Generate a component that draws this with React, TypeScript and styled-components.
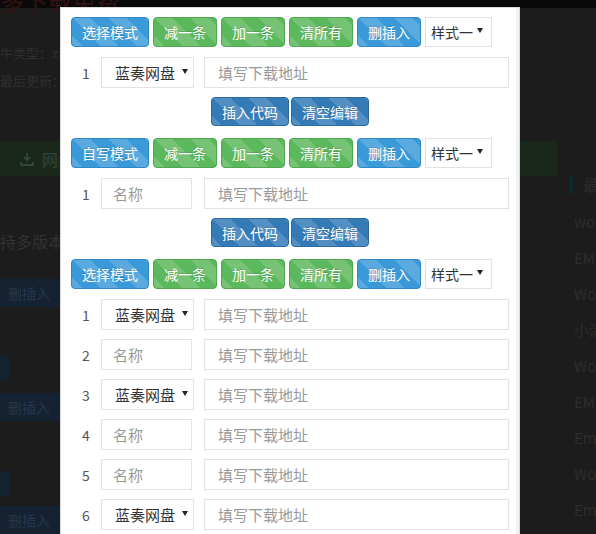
import React from "react";
import styled, { createGlobalStyle, css } from "styled-components";

// global

const GlobalStyle = createGlobalStyle`
    html, body {
        margin: 0;
        padding: 0;
        background: #1c1c1c;
    }
    body {
        font-family: "Noto Sans CJK SC", "Noto Sans", sans-serif;
    }
    * {
        box-sizing: border-box;
    }
`;

// dimmed page behind the dialog

const Page = styled.div`
    position: relative;
    width: 596px;
    height: 534px;
    overflow: hidden;
    display: flex;
    background: linear-gradient(#0a0a0a 0 8px, #1c1c1c 8px);
`;

const MainColumn = styled.div`
    width: 557px;
    flex-shrink: 0;
    display: flex;
    flex-direction: column;
    overflow: hidden;
`;

const PageTitle = styled.div`
    margin-top: -13px;
    font-size: 24px;
    line-height: 28px;
    color: #331414;
    white-space: nowrap;
`;

const MetaLine = styled.div`
    margin-top: ${p => p.$top}px;
    font-size: 13px;
    line-height: 16px;
    color: #2f2f2f;
    white-space: nowrap;
`;

const DownloadBar = styled.div`
    margin-top: 52px;
    height: 42px;
    background: #1a281b;
    display: flex;
    align-items: center;
    gap: 8px;
    padding-left: 20px;
    color: #31453a;
    font-size: 16px;
`;

const SupportText = styled.div`
    margin-top: 53px;
    font-size: 16px;
    color: #333;
    white-space: nowrap;
`;

const DimButton = styled.div`
    margin-top: ${p => p.$top}px;
    height: 28px;
    width: 64px;
    background: #142232;
    color: #26374f;
    font-size: 14px;
    line-height: 28px;
    padding-left: 8px;
    border-radius: 0 4px 4px 0;
`;

const DimSquare = styled.div`
    margin-top: ${p => p.$top}px;
    height: 30px;
    width: 10px;
    background: #142232;
    border-radius: 0 4px 4px 0;
`;

const Sidebar = styled.div`
    flex: 1;
    padding-top: 173px;
    display: flex;
    flex-direction: column;
`;

const SideHead = styled.div`
    display: flex;
    align-items: center;
    gap: 10px;
    padding-left: 12px;
    height: 22px;
    font-size: 16px;
    color: #2b2b2b;
    white-space: nowrap;
`;

const SideMark = styled.span`
    width: 4px;
    height: 19px;
    background: #10292a;
`;

const SideList = styled.div`
    padding-top: 9px;
    display: flex;
    flex-direction: column;
`;

const SideItem = styled.div`
    height: 36px;
    line-height: 36px;
    padding-left: 17px;
    font-size: 15px;
    color: #2d2d2d;
    white-space: nowrap;
`;

// dialog

const Dialog = styled.div`
    position: absolute;
    left: 61px;
    top: 8px;
    width: 458px;
    bottom: -10px;
    background: #fff;
    box-shadow: inset -3px 0 0 #f1f1f1, 0 0 0 1px #dcdcdc;
    padding: 9px 10px;
    display: flex;
    flex-direction: column;
    gap: 12px;
`;

const Section = styled.div`
    display: flex;
    flex-direction: column;
    gap: 10px;
`;

const Toolbar = styled.div`
    display: flex;
    gap: 4px;
    height: 30px;
`;

const stripes = css`
    background-image: linear-gradient(
        45deg,
        rgba(255, 255, 255, 0.16) 25%,
        transparent 25%,
        transparent 50%,
        rgba(255, 255, 255, 0.16) 50%,
        rgba(255, 255, 255, 0.16) 75%,
        transparent 75%,
        transparent
    );
    background-size: 36px 36px;
`;

const tones = {
    blue: { bg: "#3a9ad9", border: "#2e88c6" },
    green: { bg: "#5cb85c", border: "#4fa84f" },
    navy: { bg: "#337ab7", border: "#2a6aa3" },
};

const Btn = styled.button`
    height: ${p => (p.$tone === "navy" ? 29 : 30)}px;
    padding: 0 10px;
    border: 1px solid ${p => tones[p.$tone].border};
    border-radius: 4px;
    background-color: ${p => tones[p.$tone].bg};
    ${stripes};
    color: #fff;
    font-family: inherit;
    font-size: 14px;
    line-height: 1;
    text-shadow: 0 -1px 0 rgba(0, 0, 0, 0.15);
    white-space: nowrap;
`;

const StyleSelect = styled.div`
    width: 67px;
    height: 30px;
    border: 1px solid #e2e2e2;
    display: flex;
    align-items: center;
    justify-content: space-between;
    padding: 0 8px 0 5px;
    font-size: 14px;
    color: #333;
`;

const Caret = styled.span`
    width: 0;
    height: 0;
    border-left: 3px solid transparent;
    border-right: 3px solid transparent;
    border-top: 5px solid #222;
    margin-top: -3px;
`;

const RowList = styled.div`
    display: flex;
    flex-direction: column;
    gap: 9px;
`;

const Row = styled.div`
    display: flex;
    align-items: center;
    height: 31px;
`;

const RowNum = styled.span`
    width: 30px;
    text-align: center;
    font-size: 14px;
    color: #555;
`;

const PanSelect = styled.div`
    width: 93px;
    height: 31px;
    border: 1px solid #e2e2e2;
    display: flex;
    align-items: center;
    gap: 7px;
    padding-left: 13px;
    font-size: 15px;
    color: #333;
`;

const Field = styled.div`
    width: ${p => p.$width ?? "auto"};
    flex: ${p => (p.$grow ? 1 : "none")};
    margin-left: ${p => p.$gap ?? 0}px;
    height: 31px;
    border: 1px solid #e2e2e2;
    display: flex;
    align-items: center;
    padding-left: ${p => p.$pad}px;
    font-size: 15px;
    color: #999;
`;

const InsertBar = styled.div`
    display: flex;
    justify-content: center;
    gap: 2px;
    margin-top: -1px;
`;

type Kind = "pan" | "name";

const sections: { mode: string; rows: Kind[]; insert: boolean }[] = [
    { mode: "选择模式", rows: ["pan"], insert: true },
    { mode: "自写模式", rows: ["name"], insert: true },
    { mode: "选择模式", rows: ["pan", "name", "pan", "name", "name", "pan"], insert: false },
];

const sideItems = ["wordpress", "EMLOG", "WordPress", "小清新", "WordPress", "EMLOG", "Emlog", "WordPress", "Emlog"];

function App() {
    return (
        <Page>
            <GlobalStyle />
            <MainColumn>
                <PageTitle>多下载免费</PageTitle>
                <MetaLine $top={30}>牛类型：zip 格式</MetaLine>
                <MetaLine $top={12}>最后更新：2019-05-20</MetaLine>
                <DownloadBar>
                    <svg width="14" height="14" viewBox="0 0 14 14" fill="none" stroke="#31453a" strokeWidth="2">
                        <path d="M7 1v7M4 5l3 3 3-3M1 10v3h12v-3" />
                    </svg>
                    <span>网盘下载</span>
                </DownloadBar>
                <SupportText>持多版本</SupportText>
                <DimButton $top={26}>删插入</DimButton>
                <DimSquare $top={48}></DimSquare>
                <DimButton $top={12}>删插入</DimButton>
                <DimSquare $top={50}></DimSquare>
                <DimButton $top={10}>删插入</DimButton>
            </MainColumn>
            <Sidebar>
                <SideHead>
                    <SideMark />
                    <span>最新文章</span>
                </SideHead>
                <SideList>
                    {sideItems.map((t, i) => (
                        <SideItem key={i}>{t}</SideItem>
                    ))}
                </SideList>
            </Sidebar>

            <Dialog>
                {sections.map((s, si) => (
                    <Section key={si}>
                        <Toolbar>
                            <Btn $tone="blue">{s.mode}</Btn>
                            <Btn $tone="green">减一条</Btn>
                            <Btn $tone="green">加一条</Btn>
                            <Btn $tone="green">清所有</Btn>
                            <Btn $tone="blue">删插入</Btn>
                            <StyleSelect>
                                样式一 <Caret />
                            </StyleSelect>
                        </Toolbar>
                        <RowList>
                            {s.rows.map((k, ri) => (
                                <Row key={ri}>
                                    <RowNum>{ri + 1}</RowNum>
                                    {k === "pan" ? (
                                        <PanSelect>
                                            蓝奏网盘 <Caret />
                                        </PanSelect>
                                    ) : (
                                        <Field $width="91px" $pad={11}>名称</Field>
                                    )}
                                    <Field $grow $gap={k === "pan" ? 10 : 12} $pad={13}>填写下载地址</Field>
                                </Row>
                            ))}
                        </RowList>
                        {s.insert && (
                            <InsertBar>
                                <Btn $tone="navy">插入代码</Btn>
                                <Btn $tone="navy">清空编辑</Btn>
                            </InsertBar>
                        )}
                    </Section>
                ))}
            </Dialog>
        </Page>
    );
}

export default App;
